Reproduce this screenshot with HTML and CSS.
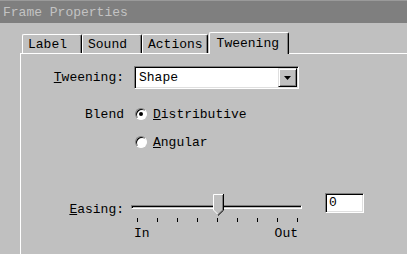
FILE: index.html
```html
<!DOCTYPE html>
<html lang="en">
<head>
  <meta charset="UTF-8">
  <title>Frame Properties</title>
  <link rel="stylesheet" href="styles.css">
</head>
<body>
<div class="dialog">
  <div class="titlebar">Frame Properties</div>
  <div class="tabs">
    <div class="tab">Label</div>
    <div class="tab">Sound</div>
    <div class="tab">Actions</div>
    <div class="tab selected">Tweening</div>
  </div>
  <div class="panel">
    <div class="row row-tween">
      <span class="lbl"><u>T</u>weening:</span>
      <div class="select">
        <span class="select-text">Shape</span>
        <span class="select-btn">
          <svg width="7" height="4" viewBox="0 0 7 4"><polygon points="0,0 7,0 3.5,4" fill="#000"/></svg>
        </span>
      </div>
    </div>
    <div class="row row-blend">
      <span class="lbl">Blend</span>
      <span class="radio checked"></span>
      <span class="radio-text"><u>D</u>istributive</span>
    </div>
    <div class="row row-angular">
      <span class="lbl"></span>
      <span class="radio"></span>
      <span class="radio-text"><u>A</u>ngular</span>
    </div>
    <div class="row row-easing">
      <span class="lbl lbl-easing"><u>E</u>asing:</span>
      <div class="slider">
        <div class="slider-body">
          <div class="track"></div>
          <svg class="thumb" width="11" height="22" viewBox="0 0 11 22">
            <polygon points="0,0 10,0 10,16 5,21 0,16" fill="#c0c0c0"/>
            <polyline points="0.5,16 0.5,0.5 10,0.5" fill="none" stroke="#fff"/>
            <polyline points="9.5,1 9.5,16 5,20.5" fill="none" stroke="#808080"/>
            <polyline points="10.5,0 10.5,16.2 5,21.5" fill="none" stroke="#000"/>
            <line x1="0.5" y1="16" x2="4.5" y2="20" stroke="#fff"/>
          </svg>
        </div>
        <div class="ticks">
          <span></span><span></span><span></span><span></span><span></span><span></span><span></span><span></span><span></span>
        </div>
        <div class="scale">
          <span>In</span>
          <span>Out</span>
        </div>
      </div>
      <div class="textbox">0</div>
    </div>
  </div>
</div>
</body>
</html>
```

FILE: styles.css
```css
body {
  margin: 0;
  background: #c0c0c0;
  font-family: 'Liberation Mono', 'DejaVu Sans Mono', monospace;
  font-size: 13px;
  color: #000;
}
.dialog {
  width: 407px;
  height: 254px;
  overflow: hidden;
}
.titlebar {
  height: 22px;
  line-height: 24px;
  padding-left: 3px;
  background: #7f7f7f;
  border-top: 1px solid #9a9a9a;
  color: #c3c3c3;
}
.tabs {
  display: flex;
  align-items: flex-end;
  margin-top: 8px;
  padding-left: 22px;
  height: 22px;
}
.tab {
  height: 18px;
  min-width: 49px;
  padding: 0 4px 0 5px;
  line-height: 19px;
  border-top: 1px solid #fff;
  border-left: 1px solid #fff;
  border-right: 1px solid #000;
  box-shadow: inset -1px 0 #808080;
  border-radius: 2px 2px 0 0;
}
.tab.selected {
  height: 21px;
  margin-left: 1px;
  padding: 0 9px 0 7px;
  line-height: 21px;
  position: relative;
  top: 1px;
  background: #c0c0c0;
  z-index: 1;
}
.panel {
  margin-left: 20px;
  border-top: 1px solid #fff;
  border-left: 1px solid #fff;
  height: 200px;
  padding-top: 12px;
}
.row {
  display: flex;
  align-items: center;
}
.lbl {
  width: 103px;
  text-align: right;
  flex-shrink: 0;
}
.row-tween {
  height: 23px;
}
.select {
  margin-left: 10px;
  width: 161px;
  height: 19px;
  background: #fff;
  border: 1px solid;
  border-color: #808080 #fff #fff #808080;
  box-shadow: inset 1px 1px #000, inset -1px -1px #dfdfdf;
  display: flex;
  align-items: center;
  padding: 1px;
}
.select-text {
  flex: 1;
  padding-left: 3px;
  line-height: 19px;
}
.select-btn {
  width: 17px;
  height: 17px;
  background: #c0c0c0;
  border: 1px solid;
  border-color: #dfdfdf #000 #000 #dfdfdf;
  box-shadow: inset 1px 1px #fff, inset -1px -1px #808080;
  display: flex;
  align-items: center;
  justify-content: center;
}
.row-blend {
  margin-top: 17px;
  height: 16px;
}
.row-angular {
  margin-top: 12px;
  height: 16px;
}
.radio {
  margin-left: 11px;
  width: 10px;
  height: 10px;
  border-radius: 50%;
  background: #fff;
  border: 1px solid;
  border-color: #808080 #fff #fff #808080;
  box-shadow: inset 1px 1px #000;
  display: flex;
  align-items: center;
  justify-content: center;
  flex-shrink: 0;
}
.radio.checked::after {
  content: '';
  width: 4px;
  height: 4px;
  border-radius: 50%;
  background: #000;
}
.radio-text {
  margin-left: 6px;
}
.row-easing {
  margin-top: 44px;
  align-items: flex-start;
}
.lbl-easing {
  margin-top: 8px;
  line-height: 15px;
}
.slider {
  margin-left: 7px;
  width: 171px;
}
.slider-body {
  position: relative;
  height: 22px;
}
.track {
  position: absolute;
  left: 0;
  right: 0;
  top: 11px;
  height: 2px;
  border: 1px solid;
  border-color: #808080 #fff #fff #808080;
  box-shadow: inset 1px 1px #000;
}
.thumb {
  position: absolute;
  left: 82px;
  top: 0;
}
.ticks {
  display: flex;
  justify-content: space-between;
  padding: 0 4px 0 6px;
  margin-top: 2px;
  height: 4px;
}
.ticks span {
  width: 1px;
  background: #000;
}
.scale {
  display: flex;
  justify-content: space-between;
  padding: 0 4px 0 3px;
  margin-top: 5px;
  line-height: 14px;
}
.textbox {
  margin-left: 23px;
  margin-top: -1px;
  width: 34px;
  height: 18px;
  padding-left: 3px;
  line-height: 18px;
  background: #fff;
  border: 1px solid;
  border-color: #808080 #fff #fff #808080;
  box-shadow: inset 1px 1px #000, inset -1px -1px #dfdfdf;
}
```
